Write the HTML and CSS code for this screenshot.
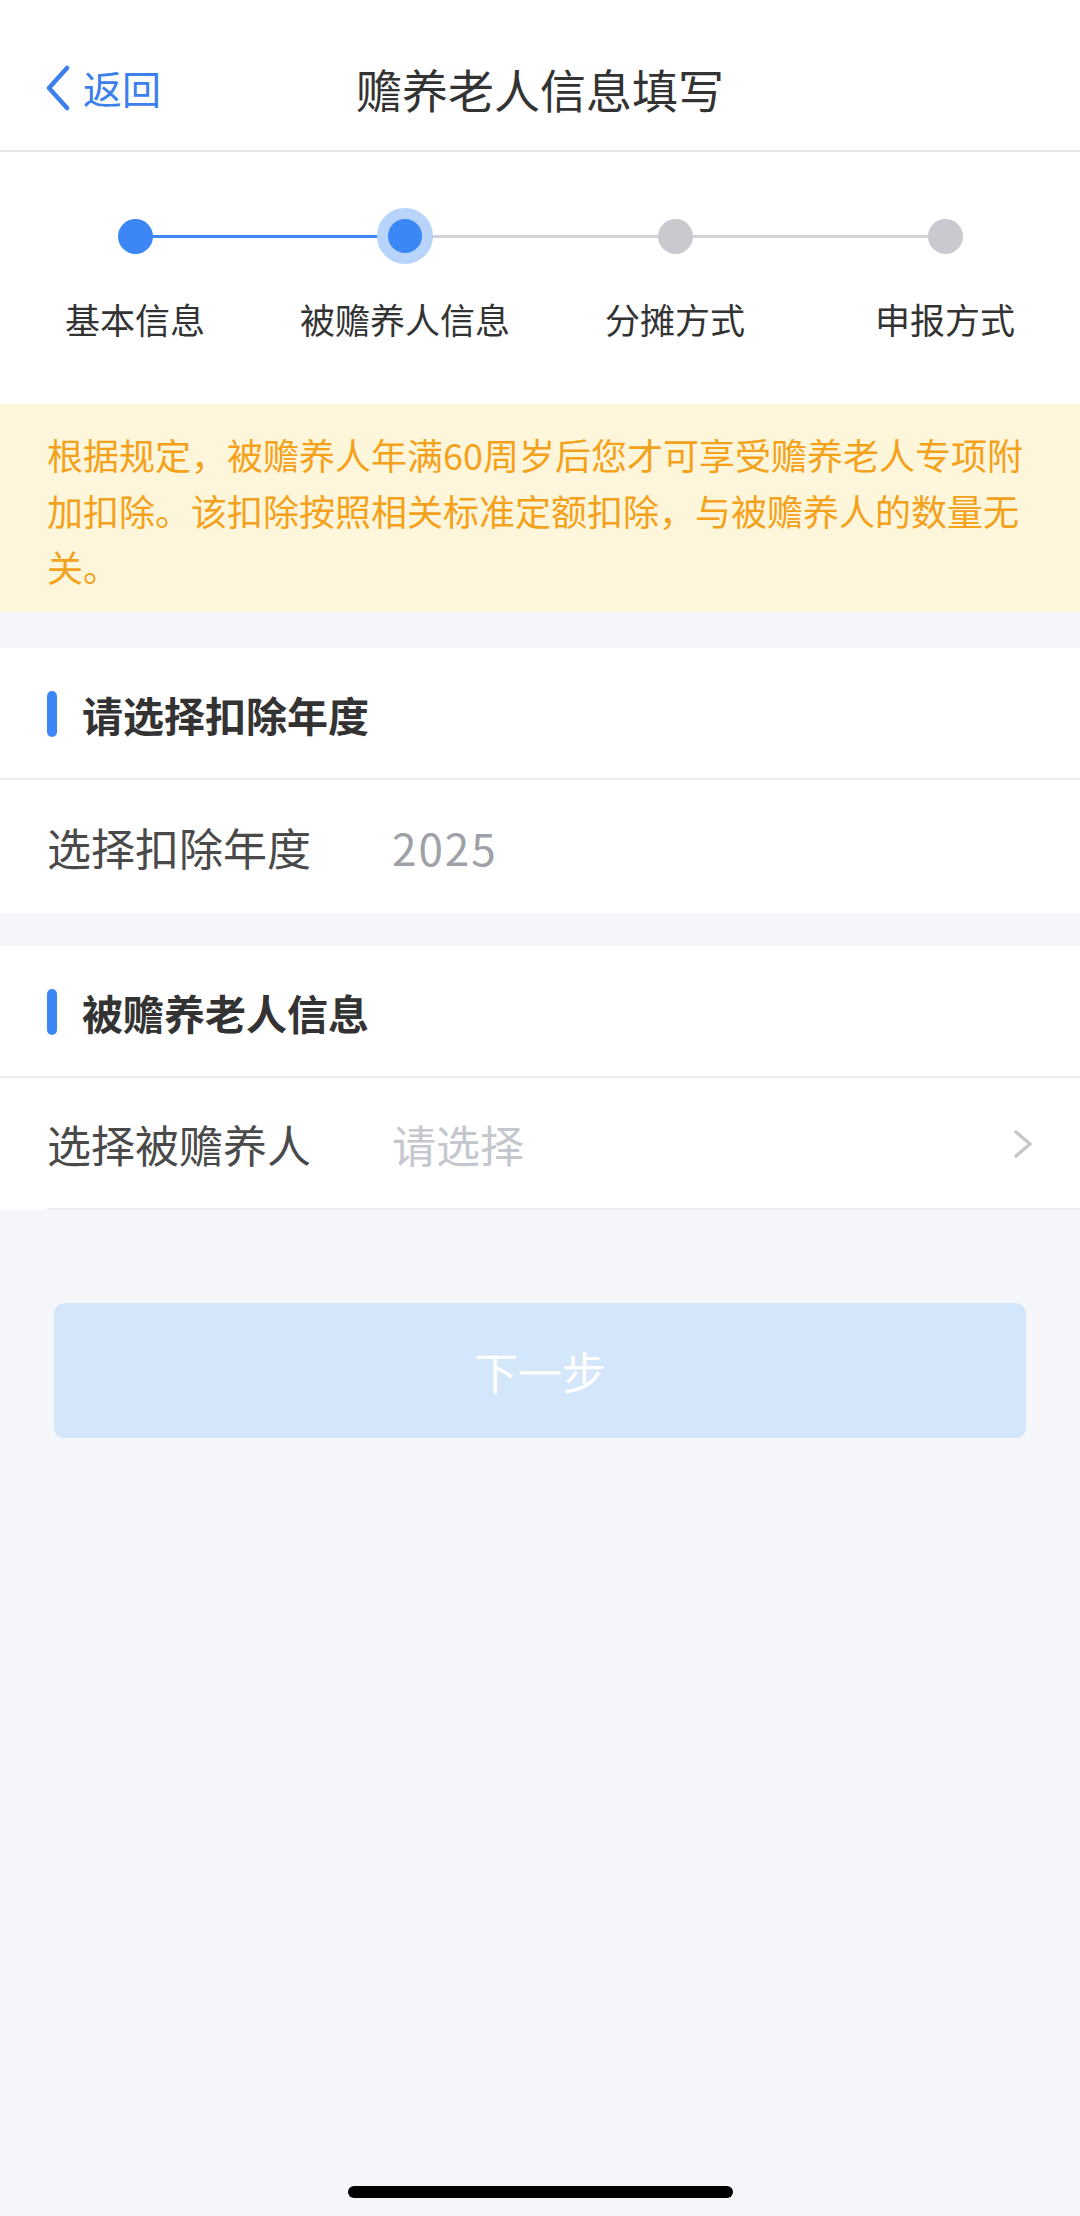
FILE: index.html
```html
<!DOCTYPE html>
<html lang="zh-CN">

<head>
    <meta charset="UTF-8">
    <meta name="viewport" content="width=device-width, initial-scale=1.0">
    <title>赡养老人信息填写</title>
    <link rel="stylesheet" href="styles.css">
</head>

<body>

    <header class="navbar">
        <div class="nav-row">
            <a class="back" href="#">
                <svg class="back-icon" viewBox="0 0 26 46" width="26" height="46">
                    <path d="M22 3 L4 23 L22 43" fill="none" stroke="currentColor" stroke-width="4.5" stroke-linecap="round" stroke-linejoin="round" />
                </svg>
                <span>返回</span>
            </a>
            <h1 class="nav-title">赡养老人信息填写</h1>
            <div></div>
        </div>
    </header>

    <!-- 步骤条 -->
    <section class="steps">
        <div class="step-dots">
            <div class="step-cell"><span class="dot done"></span></div>
            <div class="step-cell"><span class="dot current"></span></div>
            <div class="step-cell"><span class="dot"></span></div>
            <div class="step-cell"><span class="dot"></span></div>
        </div>
        <div class="step-labels">
            <span>基本信息</span>
            <span>被赡养人信息</span>
            <span>分摊方式</span>
            <span>申报方式</span>
        </div>
    </section>

    <p class="notice">根据规定，被赡养人年满60周岁后您才可享受赡养老人专项附加扣除。该扣除按照相关标准定额扣除，与被赡养人的数量无关。</p>

    <section class="card">
        <div class="card-title">请选择扣除年度</div>
        <div class="form-row">
            <span class="row-label">选择扣除年度</span>
            <span class="row-value year">2025</span>
        </div>
    </section>

    <section class="card">
        <div class="card-title">被赡养老人信息</div>
        <div class="form-row with-line">
            <span class="row-label">选择被赡养人</span>
            <span class="row-value placeholder">请选择</span>
            <svg class="arrow" viewBox="0 0 20 30" width="20" height="30">
                <path d="M3 3 L17 15 L3 27" fill="none" stroke="currentColor" stroke-width="3.5" stroke-linecap="round" stroke-linejoin="round" />
            </svg>
        </div>
    </section>

    <div class="actions">
        <button class="next-btn" disabled>下一步</button>
    </div>

    <div class="home-indicator"></div>

</body>

</html>
```

FILE: styles.css
```css
:root {
    --blue: #3c87f5;
    --page-bg: #f4f6fa;
    --text: #333;
    --line: #ebebed;
}

body {
    margin: 0;
    padding: 0;
    min-height: 2216px;
    background-color: var(--page-bg);
    font-family: "Noto Sans CJK SC", "Noto Sans", sans-serif;
    color: var(--text);
}

/* 顶部导航 */
.navbar {
    background-color: #fff;
    height: 152px;
    padding-top: 44px;
    box-sizing: border-box;
    border-bottom: 2px solid #e6e6e8;
}

.nav-row {
    display: grid;
    grid-template-columns: 1fr auto 1fr;
    align-items: center;
    height: 88px;
}

.back {
    display: flex;
    align-items: center;
    gap: 12px;
    padding-left: 45px;
    color: #3b80ec;
    text-decoration: none;
    font-size: 39px;
}

.back span {
    margin-top: -2px;
}

.nav-title {
    margin: 0;
    font-size: 46px;
    font-weight: 400;
    color: #333;
}

/* 步骤条 */
.steps {
    background-color: #fff;
    padding: 56px 0 60px;
}

.step-dots {
    display: grid;
    grid-template-columns: repeat(4, 1fr);
    height: 56px;
    background-image: linear-gradient(to right,
            transparent 135px,
            var(--blue) 135px, var(--blue) 405px,
            #d2d4d8 405px, #d2d4d8 945px,
            transparent 945px);
    background-size: 100% 3px;
    background-position: 0 center;
    background-repeat: no-repeat;
}

.step-cell {
    display: flex;
    align-items: center;
    justify-content: center;
}

.dot {
    width: 35px;
    height: 35px;
    border-radius: 50%;
    background-color: #c8cad0;
}

.dot.done {
    background-color: var(--blue);
}

.dot.current {
    width: 34px;
    height: 34px;
    background-color: var(--blue);
    border: 11px solid #b8d4fa;
}

.step-labels {
    display: grid;
    grid-template-columns: repeat(4, 1fr);
    margin-top: 30px;
    text-align: center;
    font-size: 35px;
    line-height: 50px;
    color: #333;
}

/* 提示 */
.notice {
    margin: 0 0 36px;
    padding: 22px 47px 18px;
    background-color: #fdf6da;
    color: #f4a11c;
    font-size: 36px;
    line-height: 56px;
}

/* 表单卡片 */
.card {
    background-color: #fff;
    margin-bottom: 33px;
}

.card-title {
    display: flex;
    align-items: center;
    gap: 25px;
    height: 132px;
    padding-left: 47px;
    padding-top: 2px;
    box-sizing: border-box;
    font-size: 41px;
    font-weight: 700;
    color: #333;
    border-bottom: 2px solid var(--line);
}

.card-title::before {
    content: "";
    width: 10px;
    height: 46px;
    border-radius: 5px;
    background-color: var(--blue);
}

.form-row {
    display: flex;
    align-items: center;
    height: 133px;
    padding: 0 47px;
    font-size: 44px;
}

.row-label {
    width: 345px;
    color: #4a4a4a;
}

.row-value {
    flex: 1;
    color: #9ea1a7;
}

.row-value.year {
    letter-spacing: 2px;
}

.row-value.placeholder {
    color: #c4c7cd;
}

.arrow {
    color: #c6c7cb;
}

.with-line {
    position: relative;
    height: 132px;
}

.with-line::after {
    content: "";
    position: absolute;
    left: 47px;
    right: 0;
    bottom: 0;
    height: 2px;
    background-color: var(--line);
}

/* 底部按钮 */
.actions {
    padding: 60px 54px 0;
}

.next-btn {
    display: block;
    width: 100%;
    height: 135px;
    border: none;
    border-radius: 10px;
    background-color: #d3e6fa;
    color: #fff;
    font-family: inherit;
    font-size: 44px;
}

.home-indicator {
    position: fixed;
    left: 348px;
    bottom: 18px;
    width: 385px;
    height: 12px;
    border-radius: 6px;
    background-color: #000;
}
```
